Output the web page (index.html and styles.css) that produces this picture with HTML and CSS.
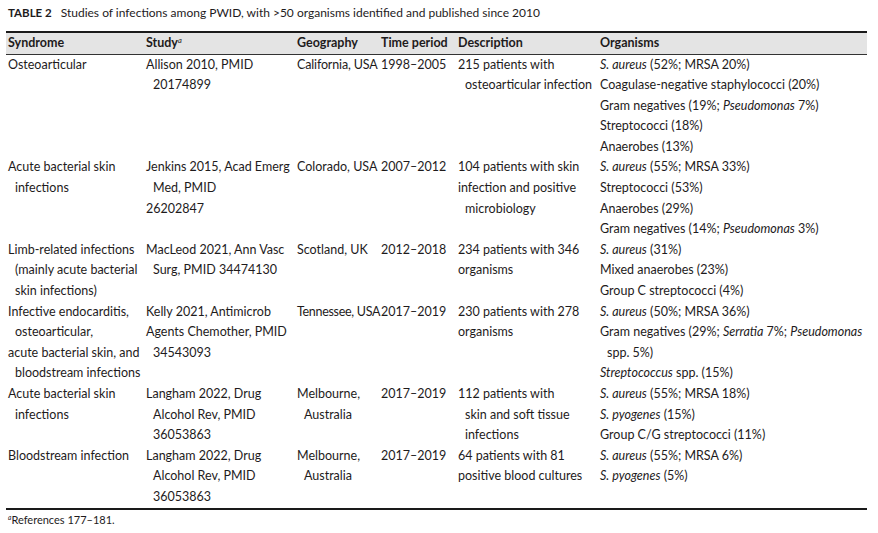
FILE: index.html
```html
<!DOCTYPE html>
<html>
<head>
<meta charset="utf-8">
<link rel="stylesheet" href="styles.css">
</head>
<body>
<div class="page">
  <div class="caption"><b>TABLE 2</b><span class="captext">Studies of infections among PWID, with &gt;50 organisms identified and published since 2010</span></div>
  <div class="tbl">
    <div class="row head">
      <div>Syndrome</div>
      <div>Study<sup class="fn">a</sup></div>
      <div>Geography</div>
      <div>Time period</div>
      <div>Description</div>
      <div>Organisms</div>
    </div>
    <div class="row">
      <div><p>Osteoarticular</p></div>
      <div><p>Allison 2010, PMID</p><p class="ind">20174899</p></div>
      <div><p class="tight">California, USA</p></div>
      <div><p>1998–2005</p></div>
      <div><p>215 patients with</p><p class="ind">osteoarticular infection</p></div>
      <div><p><i>S. aureus</i> (52%; MRSA 20%)</p><p>Coagulase-negative staphylococci (20%)</p><p>Gram negatives (19%; <i>Pseudomonas</i> 7%)</p><p>Streptococci (18%)</p><p>Anaerobes (13%)</p></div>
    </div>
    <div class="row">
      <div><p>Acute bacterial skin</p><p class="ind">infections</p></div>
      <div><p>Jenkins 2015, Acad Emerg</p><p class="ind">Med, PMID</p><p>26202847</p></div>
      <div><p>Colorado, USA</p></div>
      <div><p>2007–2012</p></div>
      <div><p>104 patients with skin</p><p>infection and positive</p><p class="ind">microbiology</p></div>
      <div><p><i>S. aureus</i> (55%; MRSA 33%)</p><p>Streptococci (53%)</p><p>Anaerobes (29%)</p><p>Gram negatives (14%; <i>Pseudomonas</i> 3%)</p></div>
    </div>
    <div class="row">
      <div><p>Limb-related infections</p><p class="ind">(mainly acute bacterial</p><p class="ind">skin infections)</p></div>
      <div><p>MacLeod 2021, Ann Vasc</p><p class="ind">Surg, PMID 34474130</p></div>
      <div><p>Scotland, UK</p></div>
      <div><p>2012–2018</p></div>
      <div><p>234 patients with 346</p><p>organisms</p></div>
      <div><p><i>S. aureus</i> (31%)</p><p>Mixed anaerobes (23%)</p><p>Group C streptococci (4%)</p></div>
    </div>
    <div class="row">
      <div><p>Infective endocarditis,</p><p class="ind">osteoarticular,</p><p>acute bacterial skin, and</p><p class="ind">bloodstream infections</p></div>
      <div><p>Kelly 2021, Antimicrob</p><p>Agents Chemother, PMID</p><p class="ind">34543093</p></div>
      <div><p class="tighter">Tennessee, USA</p></div>
      <div><p>2017–2019</p></div>
      <div><p>230 patients with 278</p><p>organisms</p></div>
      <div><p><i>S. aureus</i> (50%; MRSA 36%)</p><p>Gram negatives (29%; <i>Serratia</i> 7%; <i>Pseudomonas</i></p><p class="ind">spp. 5%)</p><p><i>Streptococcus</i> spp. (15%)</p></div>
    </div>
    <div class="row">
      <div><p>Acute bacterial skin</p><p class="ind">infections</p></div>
      <div><p>Langham 2022, Drug</p><p class="ind">Alcohol Rev, PMID</p><p class="ind">36053863</p></div>
      <div><p>Melbourne,</p><p class="ind">Australia</p></div>
      <div><p>2017–2019</p></div>
      <div><p>112 patients with</p><p class="ind">skin and soft tissue</p><p class="ind">infections</p></div>
      <div><p><i>S. aureus</i> (55%; MRSA 18%)</p><p><i>S. pyogenes</i> (15%)</p><p>Group C/G streptococci (11%)</p></div>
    </div>
    <div class="row last">
      <div><p>Bloodstream infection</p></div>
      <div><p>Langham 2022, Drug</p><p class="ind">Alcohol Rev, PMID</p><p class="ind">36053863</p></div>
      <div><p>Melbourne,</p><p class="ind">Australia</p></div>
      <div><p>2017–2019</p></div>
      <div><p>64 patients with 81</p><p>positive blood cultures</p></div>
      <div><p><i>S. aureus</i> (55%; MRSA 6%)</p><p><i>S. pyogenes</i> (5%)</p></div>
    </div>
  </div>
  <div class="foot"><sup class="fn">a</sup>References 177–181.</div>
</div>
</body>
</html>
```
FILE: styles.css
```css
html, body {
  margin: 0;
  padding: 0;
  background: #ffffff;
}
body {
  font-family: Lato, "Open Sans", sans-serif;
  font-size: 12.5px;
  color: #1e1b1c;
}
.page {
  width: 861px;
  padding: 4px 0 0 6px;
}
.caption {
  padding-left: 2px;
  line-height: 17px;
  height: 17px;
  margin-bottom: 10px;
  font-size: 12px;
}
.caption b {
  font-weight: 700;
  font-size: 11.5px;
}
.captext {
  margin-left: 9px;
}
.tbl {
  border-top: 2px solid #1a1a1a;
  border-bottom: 2px solid #1a1a1a;
}
.row {
  display: grid;
  grid-template-columns: 138px 151px 84px 77px 142px 1fr;
  padding-left: 2px;
  line-height: 20.6px;
}
.row p {
  margin: 0;
  white-space: nowrap;
}
.row .ind {
  padding-left: 7px;
}
.row .tight {
  letter-spacing: -0.15px;
}
.row .tighter {
  letter-spacing: -0.3px;
}
.head {
  background: #e4e4e4;
  border-bottom: 1.5px solid #333333;
  font-weight: 700;
  line-height: 20.5px;
}
.fn {
  font-style: italic;
  font-size: 0.6em;
  vertical-align: 0.6em;
  line-height: 0;
  font-weight: 400;
}
.foot {
  padding-left: 2px;
  margin-top: 3px;
  font-size: 11px;
  line-height: 14px;
}
```
